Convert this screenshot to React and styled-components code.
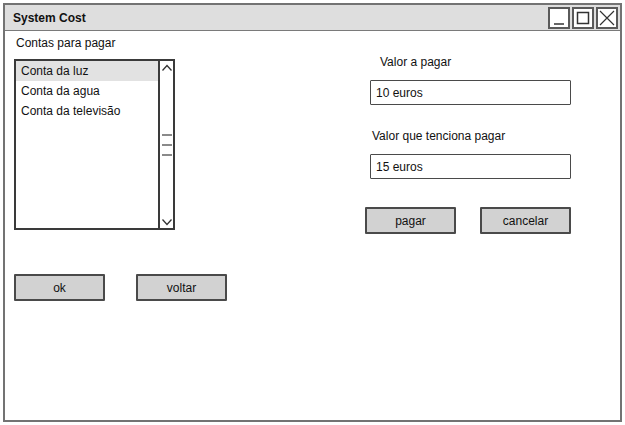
import React from "react";
import styled, { createGlobalStyle } from "styled-components";

const FONT = `"Liberation Sans", "DejaVu Sans", Arial, sans-serif`;

const GlobalStyle = createGlobalStyle`
  html, body {
    margin: 0;
    padding: 0;
    background: #ffffff;
  }
  body {
    font-family: ${FONT};
    font-size: 12px;
    color: #111;
  }
  * {
    box-sizing: border-box;
  }
`;

const accounts = ["Conta da luz", "Conta da agua", "Conta da televisão"];

const App = () => {
  return (
    <>
      <GlobalStyle />
      <Window>
        <TitleBar>
          <Title>System Cost</Title>
          <WinButtons>
            <WinButton aria-label="minimize">
              <svg width="18" height="18" viewBox="0 0 18 18">
                <line x1="4" y1="15" x2="14" y2="15" stroke="#333" strokeWidth="1.5" />
              </svg>
            </WinButton>
            <WinButton aria-label="maximize">
              <svg width="18" height="18" viewBox="0 0 18 18">
                <rect x="3.5" y="3.5" width="11" height="11" fill="none" stroke="#333" strokeWidth="1.5" />
              </svg>
            </WinButton>
            <WinButton aria-label="close">
              <svg width="18" height="18" viewBox="0 0 18 18">
                <path d="M2 2 L16 16 M16 2 L2 16" stroke="#333" strokeWidth="1.2" />
              </svg>
            </WinButton>
          </WinButtons>
        </TitleBar>

        <Body>
          <LeftColumn>
            <Label indent={2} gapBelow={9}>Contas para pagar</Label>
            <ListBox>
              <Items>
                {accounts.map((item, i) => (
                  <Row key={item} selected={i === 0}>
                    {item}
                  </Row>
                ))}
              </Items>
              <ScrollBar>
                <svg width="12" height="8" viewBox="0 0 12 8">
                  <path d="M1.5 6.5 L6 1.5 L10.5 6.5" fill="none" stroke="#333" strokeWidth="1.3" />
                </svg>
                <Grip>
                  <span />
                  <span />
                  <span />
                </Grip>
                <svg width="12" height="8" viewBox="0 0 12 8">
                  <path d="M1.5 1.5 L6 6.5 L10.5 1.5" fill="none" stroke="#333" strokeWidth="1.3" />
                </svg>
              </ScrollBar>
            </ListBox>
            <ButtonRow gap={31} top={44}>
              <Button>ok</Button>
              <Button>voltar</Button>
            </ButtonRow>
          </LeftColumn>

          <RightColumn>
            <Label indent={15} gapBelow={11}>Valor a pagar</Label>
            <Field readOnly defaultValue="10 euros" />
            <Label indent={7} top={24} gapBelow={11}>Valor que tenciona pagar</Label>
            <Field readOnly defaultValue="15 euros" />
            <ButtonRow gap={24} top={28}>
              <Button>pagar</Button>
              <Button>cancelar</Button>
            </ButtonRow>
          </RightColumn>
        </Body>
      </Window>
    </>
  );
};

// Window frame
const Window = styled.div`
  margin: 3px;
  width: 619px;
  height: 419px;
  border: 2px solid #737373;
  display: flex;
  flex-direction: column;
  background: #fff;
`;

const TitleBar = styled.div`
  height: 26px;
  background: #dedede;
  border-bottom: 1px solid #7a7a7a;
  display: flex;
  align-items: center;
  justify-content: space-between;
  padding: 0 2px 0 8px;
`;

const Title = styled.span`
  font-weight: bold;
  font-size: 12px;
  color: #111;
`;

const WinButtons = styled.div`
  display: flex;
  gap: 2px;
`;

const WinButton = styled.div`
  width: 22px;
  height: 22px;
  background: #fff;
  border: 2px solid #5a5a5a;
  display: flex;
  align-items: center;
  justify-content: center;
`;

// Content
const Body = styled.div`
  flex: 1;
  display: flex;
  padding-top: 5px;
`;

const LeftColumn = styled.div`
  display: flex;
  flex-direction: column;
  padding-left: 9px;
`;

const RightColumn = styled.div`
  display: flex;
  flex-direction: column;
  align-items: flex-start;
  margin-left: 138px;
  padding-top: 19px;
`;

const Label = styled.div`
  line-height: 14px;
  font-size: 12px;
  padding-left: ${(p) => p.indent || 0}px;
  margin-top: ${(p) => p.top || 0}px;
  margin-bottom: ${(p) => p.gapBelow}px;
  color: #111;
`;

const ListBox = styled.div`
  width: 161px;
  height: 171px;
  border: 2px solid #3a3a3a;
  display: flex;
  background: #fff;
`;

const Items = styled.div`
  flex: 1;
  display: flex;
  flex-direction: column;
`;

const Row = styled.div`
  height: 20px;
  line-height: 20px;
  padding-left: 5px;
  font-size: 12px;
  background: ${(p) => (p.selected ? "#e2e2e2" : "transparent")};
`;

const ScrollBar = styled.div`
  width: 15px;
  border-left: 2px solid #3a3a3a;
  display: flex;
  flex-direction: column;
  align-items: center;
  justify-content: space-between;
  padding: 3px 0 2px;
`;

const Grip = styled.div`
  display: flex;
  flex-direction: column;
  gap: 8px;

  span {
    display: block;
    width: 10px;
    height: 2px;
    background: #8a8a8a;
  }
`;

const Field = styled.input`
  margin-left: 5px;
  width: 201px;
  height: 25px;
  border: 1.5px solid #4a4a4a;
  border-radius: 1px;
  padding: 0 0 0 5px;
  font-family: ${FONT};
  font-size: 12px;
  color: #111;
  background: #fff;
  outline: none;
`;

const ButtonRow = styled.div`
  display: flex;
  gap: ${(p) => p.gap}px;
  margin-top: ${(p) => p.top}px;
`;

const Button = styled.div`
  flex-shrink: 0;
  width: 91px;
  height: 27px;
  background: #d2d2d2;
  border: 2px solid #4a4a4a;
  border-radius: 1px;
  display: flex;
  align-items: center;
  justify-content: center;
  font-size: 12px;
  color: #111;
`;

export default App;
